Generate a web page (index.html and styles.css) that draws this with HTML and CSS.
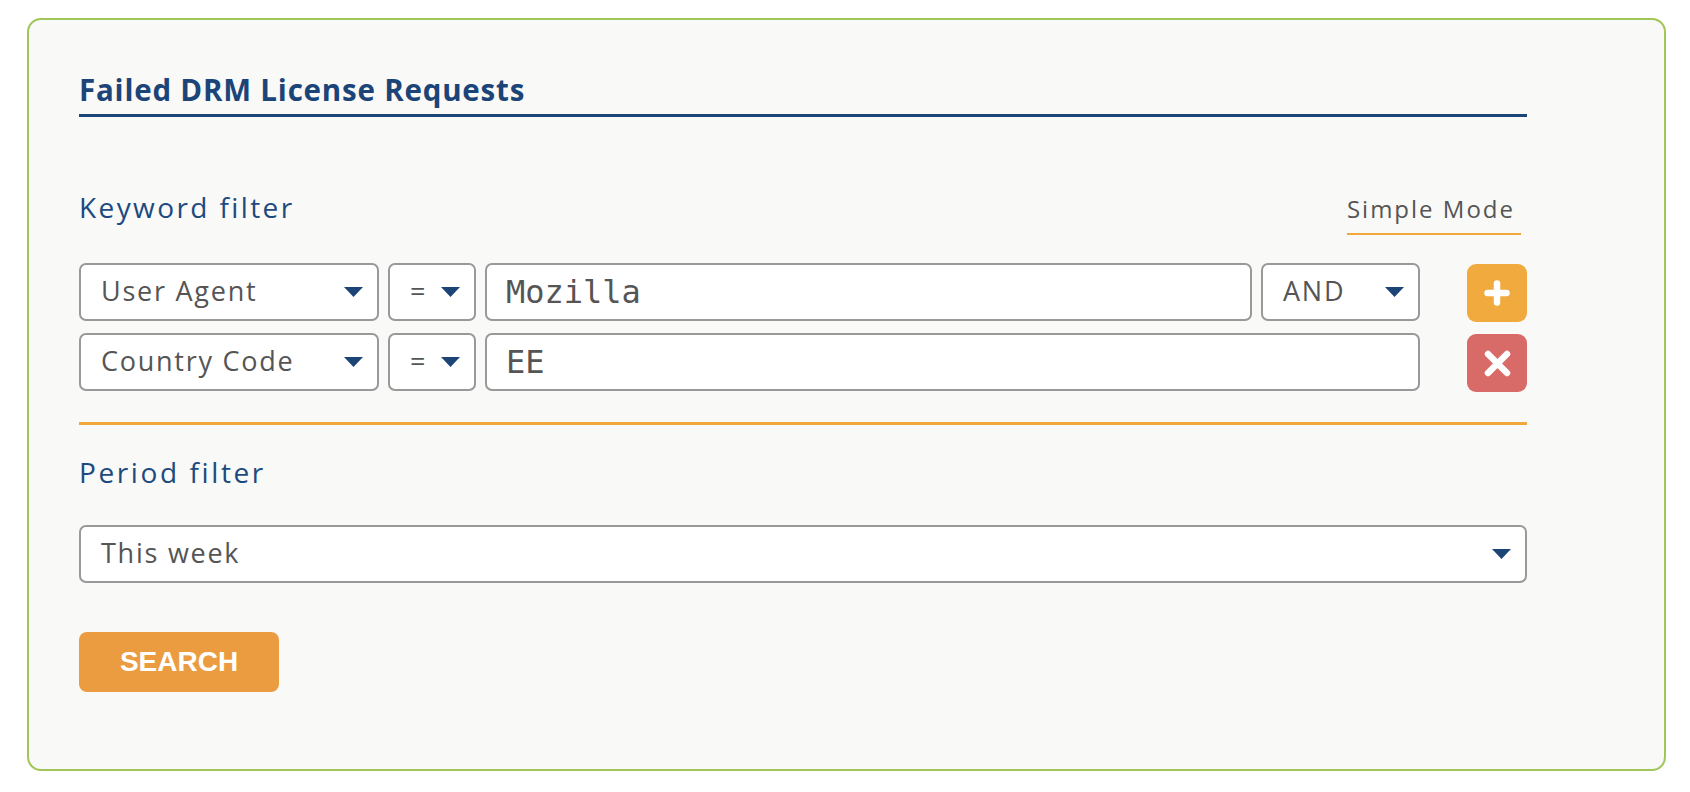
FILE: index.html
```html
<!DOCTYPE html>
<html lang="en">
<head>
<meta charset="utf-8">
<title>Failed DRM License Requests</title>
<link rel="stylesheet" href="styles.css">
</head>
<body>
<div class="page">
  <div class="panel">
    <div class="form">
      <h2 class="title">Failed DRM License Requests</h2>

      <div class="head">
        <span class="label">Keyword filter</span>
        <span class="mode">Simple Mode</span>
      </div>

      <div class="rows">
        <div class="row">
          <div class="box select key"><span>User Agent</span><svg class="caret" width="19" height="10" viewBox="0 0 19 10"><polygon points="0,0 19,0 9.5,10"/></svg></div>
          <div class="box select op"><span>=</span><svg class="caret" width="19" height="10" viewBox="0 0 19 10"><polygon points="0,0 19,0 9.5,10"/></svg></div>
          <div class="box value">Mozilla</div>
          <div class="box select join"><span>AND</span><svg class="caret" width="19" height="10" viewBox="0 0 19 10"><polygon points="0,0 19,0 9.5,10"/></svg></div>
          <button class="icon-btn add" type="button" aria-label="Add condition">
            <svg width="26" height="26" viewBox="0 0 26 26"><path d="M3.5 13H22.5M13 3.5V22.5"/></svg>
          </button>
        </div>
        <div class="row">
          <div class="box select key"><span>Country Code</span><svg class="caret" width="19" height="10" viewBox="0 0 19 10"><polygon points="0,0 19,0 9.5,10"/></svg></div>
          <div class="box select op"><span>=</span><svg class="caret" width="19" height="10" viewBox="0 0 19 10"><polygon points="0,0 19,0 9.5,10"/></svg></div>
          <div class="box value wide">EE</div>
          <button class="icon-btn remove" type="button" aria-label="Remove condition">
            <svg width="27" height="27" viewBox="0 0 27 27"><path d="M4 4L23 23M23 4L4 23"/></svg>
          </button>
        </div>
      </div>

      <div class="sep"></div>

      <div class="label period-label">Period filter</div>

      <div class="box select period"><span>This week</span><svg class="caret" width="19" height="10" viewBox="0 0 19 10"><polygon points="0,0 19,0 9.5,10"/></svg></div>

      <button class="search" type="button">SEARCH</button>
    </div>
  </div>
</div>
</body>
</html>
```

FILE: styles.css
```css
* {
  box-sizing: border-box;
  margin: 0;
  padding: 0;
}

body {
  margin: 0;
  background: #ffffff;
  font-family: "Open Sans", "Noto Sans", sans-serif;
}

.page {
  padding: 18px 0 0 27px;
}

.panel {
  width: 1639px;
  border: 2px solid #a0c65a;
  border-radius: 14px;
  background: #f9f9f8;
  padding: 55px 50px 77px;
}

.form {
  width: 1448px;
}

.title {
  font-size: 29.5px;
  font-weight: 700;
  line-height: 30px;
  letter-spacing: 0.8px;
  color: #1b4478;
  padding-bottom: 9px;
  border-bottom: 3px solid #1b4478;
}

.head {
  display: flex;
  justify-content: space-between;
  align-items: baseline;
  margin-top: 75px;
}

.label {
  font-size: 28px;
  line-height: 30px;
  color: #1d4a7e;
  letter-spacing: 2.4px;
}

.mode {
  font-size: 24px;
  line-height: 30px;
  color: #555555;
  letter-spacing: 2px;
  padding: 0 6px 9px 0;
  margin-right: 6px;
  border-bottom: 2px solid #f0a83c;
}

.rows {
  margin-top: 28px;
  display: flex;
  flex-direction: column;
  gap: 12px;
}

.row {
  display: flex;
  gap: 9px;
  height: 58px;
}

.box {
  background: #ffffff;
  border: 2px solid #999999;
  border-radius: 7px;
  height: 58px;
  display: flex;
  align-items: center;
  color: #555555;
}

.select {
  justify-content: space-between;
  padding: 0 14px 3px 20px;
  font-size: 27px;
  line-height: 1;
  letter-spacing: 1.75px;
}

.caret {
  flex: none;
  fill: #1d4477;
  margin-top: 3px;
}

.key {
  width: 300px;
}

.op {
  width: 88px;
}

.join {
  width: 159px;
}

.value {
  width: 767px;
  padding: 0 19px;
  font-family: "DejaVu Sans Mono", "Liberation Mono", monospace;
  font-size: 32px;
  line-height: 1;
}

.value.wide {
  width: 935px;
}

.icon-btn {
  margin-left: auto;
  margin-top: 1px;
  width: 60px;
  height: 58px;
  border: 0;
  border-radius: 9px;
  display: flex;
  align-items: center;
  justify-content: center;
  cursor: pointer;
}

.icon-btn svg {
  fill: none;
  stroke: #ffffff;
  stroke-width: 6.5;
  stroke-linecap: round;
}

.add {
  background: #f0aa3d;
}

.remove {
  background: #d86b68;
}

.sep {
  height: 3px;
  background: #f0a83c;
  margin-top: 31px;
}

.period-label {
  display: block;
  margin-top: 32px;
  letter-spacing: 2.6px;
}

.period {
  width: 100%;
  margin-top: 38px;
}

.search {
  display: block;
  margin-top: 49px;
  width: 200px;
  height: 60px;
  border: 0;
  border-radius: 8px;
  background: #ec9c40;
  color: #ffffff;
  font-family: "Liberation Sans", Arial, sans-serif;
  font-weight: 700;
  font-size: 28px;
  cursor: pointer;
}
```
